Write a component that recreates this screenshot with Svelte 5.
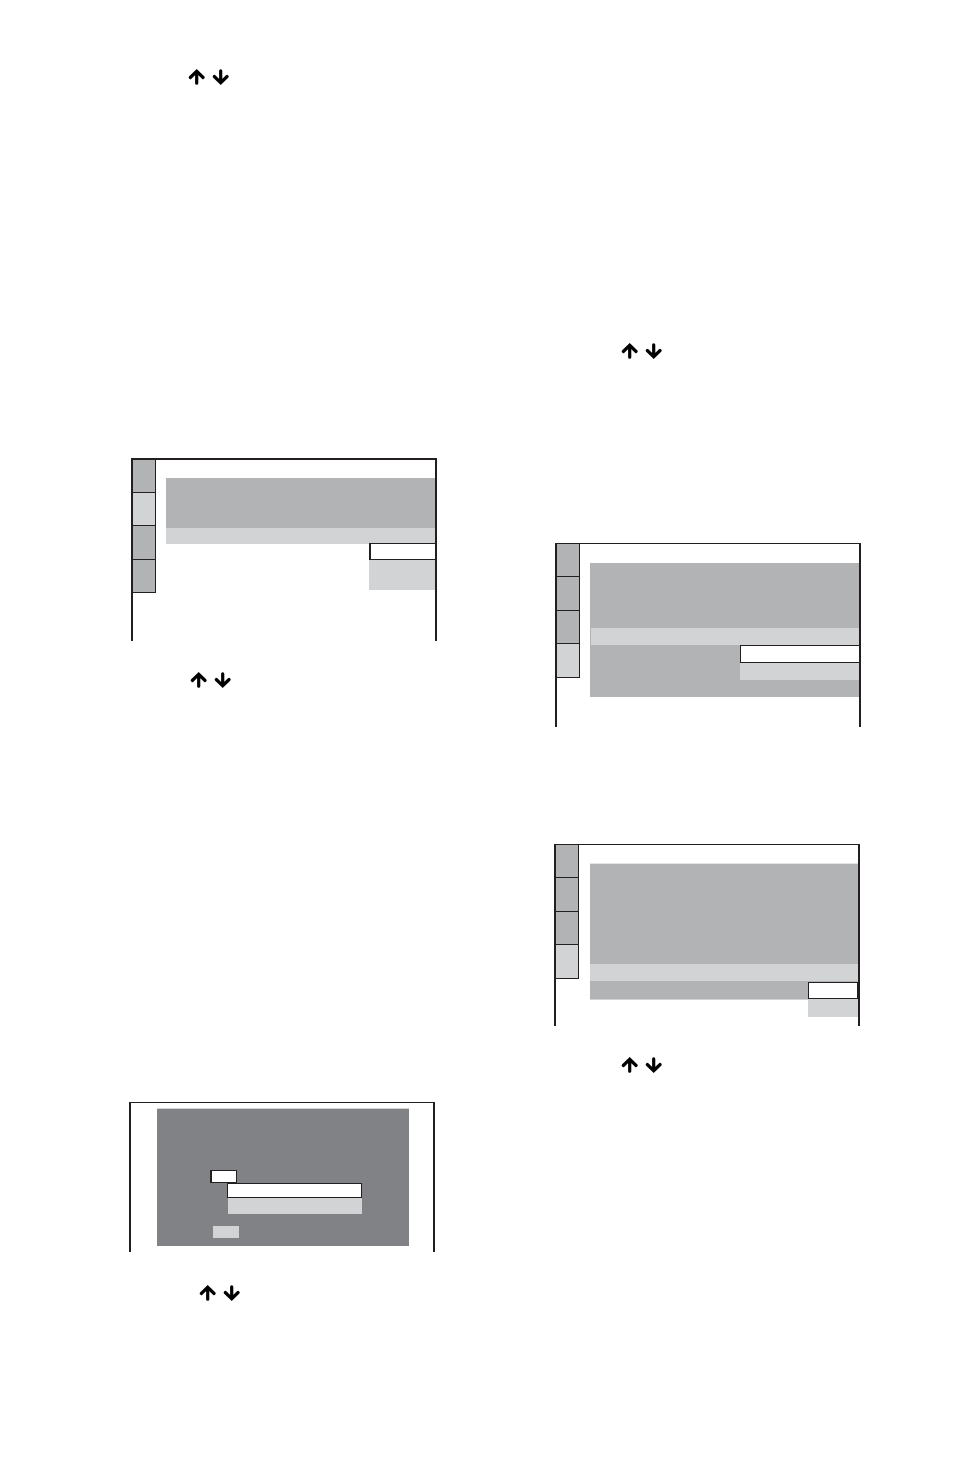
<script>
  const darkLine = '#231f20';
</script>

{#snippet arrows()}
  <svg width="42" height="16" viewBox="0 0 42 16" fill="none" stroke="#000" stroke-width="3.2" stroke-linecap="round" aria-hidden="true">
    <path d="M8.7 14.2V3M2.3 8.5 8.7 2.3l6.4 6.2" />
    <path d="M32.7 1.8v11M26.3 7.5l6.4 6.2 6.4-6.2" />
  </svg>
{/snippet}

{#snippet tabs(selected)}
  <nav class="tabs" aria-label="Setup">
    {#each [0, 1, 2, 3] as i}
      <button class="tab" class:active={i === selected} aria-label={`Setup ${i + 1}`}></button>
    {/each}
  </nav>
{/snippet}

<main style:--line={darkLine}>
  <section class="column left">
    <div class="keys first">{@render arrows()}</div>

    <div class="screen picture">
      {@render tabs(1)}
      <div class="content">
        <div class="rows"></div>
        <div class="row current"></div>
        <div class="menu">
          <button class="option chosen" aria-label="Option 1"></button>
          <button class="option" aria-label="Option 2"></button>
        </div>
      </div>
    </div>

    <div class="keys second">{@render arrows()}</div>

    <div class="screen dialog">
      <div class="panel">
        <button class="field" aria-label="Value"></button>
        <div class="list">
          <button class="option chosen" aria-label="Option 1"></button>
          <button class="option" aria-label="Option 2"></button>
        </div>
        <button class="confirm" aria-label="Confirm"></button>
      </div>
    </div>

    <div class="keys third">{@render arrows()}</div>
  </section>

  <section class="column right">
    <div class="keys first">{@render arrows()}</div>

    <div class="screen middle">
      {@render tabs(3)}
      <div class="content">
        <div class="rows"></div>
        <div class="row current"></div>
        <div class="rows rest"></div>
        <div class="menu">
          <button class="option chosen" aria-label="Option 1"></button>
          <button class="option" aria-label="Option 2"></button>
        </div>
      </div>
    </div>

    <div class="screen lower">
      {@render tabs(3)}
      <div class="content">
        <div class="rows"></div>
        <div class="row current"></div>
        <div class="rows rest"></div>
        <div class="menu">
          <button class="option chosen" aria-label="Option 1"></button>
          <button class="option" aria-label="Option 2"></button>
        </div>
      </div>
    </div>

    <div class="keys second">{@render arrows()}</div>
  </section>
</main>

<style>
  :global(body) {
    margin: 0;
    background: #fff;
    font-family: "Liberation Sans", sans-serif;
  }

  main, main * { box-sizing: border-box; }

  main {
    display: grid;
    grid-template-columns: 308fr 307fr;
    column-gap: 117px;
    padding: 69px 93px 182px 129px;
  }

  .column {
    display: flex;
    flex-direction: column;
    align-items: flex-start;
  }

  button {
    display: block;
    margin: 0;
    padding: 0;
    border: 0;
    border-radius: 0;
    background: #d1d3d4;
  }

  svg { display: block; }

  .keys { height: 16px; }
  .left .keys { margin-left: 59px; }
  .left .second { margin-top: 31px; margin-left: 61px; }
  .left .third { margin-top: 33px; margin-left: 70px; }
  .right .keys { margin-left: 67px; }
  .right .first { margin-top: 274px; }
  .right .second { margin-top: 31px; }

  .screen {
    display: flex;
    border: solid var(--line);
    border-width: 1px 2px 0;
  }
  .left .screen { width: calc(100% - 2px); }
  .right .screen { width: calc(100% - 1px); }

  .picture {
    align-self: flex-end;
    height: 183px;
    margin-top: 373px;
    border-top-width: 2px;
  }
  .dialog {
    height: 150px;
    margin-top: 414px;
    padding: 5px 24px 0 26px;
  }
  .middle {
    align-self: flex-end;
    height: 184px;
    margin-top: 184px;
  }
  .lower {
    height: 182px;
    margin-top: 117px;
  }

  .tabs {
    display: grid;
    grid-template-rows: 33px 34px 33px 34px;
    align-content: start;
    flex: 0 0 23px;
  }
  .picture .tabs { grid-template-rows: 33px 33px 34px 33px; }
  .tab {
    border: solid var(--line);
    border-width: 0 1px 1px 0;
    background: #b1b3b5;
  }
  .tab.active { background: #d1d3d4; }

  .content {
    position: relative;
    flex: 1;
    align-self: flex-start;
    margin: 19px 0 0 10px;
  }
  .picture .content { margin-top: 18px; }
  .rows { background: #b1b3b5; }
  .row { height: 17px; }
  .current { background: #d1d3d4; }

  .picture .rows { height: 50px; }
  .picture .row { height: 16px; }
  .middle .rows { height: 65px; }
  .middle .rest { height: 52px; }
  .middle .row { border-left: 1px solid #b1b3b5; }
  .lower .content { margin: 18px 0 0 11px; }
  .lower .rows { height: 101px; border-top: 1px solid #e1e3e4; }
  .lower .rest {
    height: 19px;
    border-top: 0;
    border-bottom: 1px solid #d1d3d4;
  }

  .menu { position: absolute; right: 0; }
  .picture .menu { top: 65px; width: 66px; }
  .middle .menu { top: 82px; width: 119px; }
  .lower .menu { top: 119px; width: 50px; }
  .option { width: 100%; height: 17px; }
  .chosen { border: 1px solid var(--line); background: #fff; }
  .picture .chosen { border-width: 1px 0 1px 2px; }
  .picture .option:last-child { height: 30px; }
  .middle .chosen { height: 18px; border-right-width: 0; }
  .lower .option:last-child { height: 18px; }

  .panel {
    flex: 1;
    align-self: flex-start;
    height: 138px;
    padding: 61px 47px 0 53px;
    border-top: 1px solid #d1d3d4;
    background: #818285;
  }
  .field {
    width: 27px;
    height: 13px;
    border: solid var(--line);
    border-width: 1px 1px 1px 2px;
    background: #fff;
  }
  .list { margin-left: 17px; }
  .list .chosen { height: 15px; }
  .list .option:last-child { width: calc(100% - 1px); height: 16px; margin-left: 1px; }
  .confirm {
    width: 26px;
    height: 12px;
    margin: 12px 0 0 3px;
  }
</style>
